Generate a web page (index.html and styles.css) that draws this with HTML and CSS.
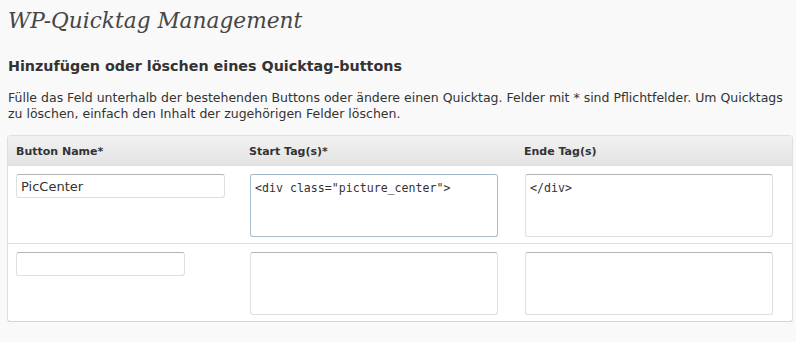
FILE: index.html
```html
<!DOCTYPE html>
<html lang="de">
<head>
    <meta charset="UTF-8">
    <title>WP-Quicktag Management</title>
    <link rel="stylesheet" href="styles.css">
</head>
<body>
    <div class="wrap">
        <h2>WP-Quicktag Management</h2>

        <h3>Hinzufügen oder löschen eines Quicktag-buttons</h3>
        <p>Fülle das Feld unterhalb der bestehenden Buttons oder ändere einen Quicktag. Felder mit * sind Pflichtfelder. Um Quicktags zu löschen, einfach den Inhalt der zugehörigen Felder löschen.</p>

        <table class="widefat">
            <thead>
                <tr>
                    <th class="col-name">Button Name*</th>
                    <th class="col-start">Start Tag(s)*</th>
                    <th class="col-end">Ende Tag(s)</th>
                </tr>
            </thead>
            <tbody>
                <tr>
                    <td><input type="text" class="name-wide" value="PicCenter"></td>
                    <td><textarea class="tag-field focused">&lt;div class="picture_center"&gt;</textarea></td>
                    <td><textarea class="tag-field">&lt;/div&gt;</textarea></td>
                </tr>
                <tr>
                    <td><input type="text" class="name-short" value=""></td>
                    <td><textarea class="tag-field"></textarea></td>
                    <td><textarea class="tag-field"></textarea></td>
                </tr>
            </tbody>
        </table>
    </div>
</body>
</html>
```

FILE: styles.css
```css
body {
    margin: 0;
    padding: 0;
    background: #f9f9f9;
    color: #333;
    font-family: 'DejaVu Sans', Verdana, sans-serif;
}

.wrap {
    padding: 5px 3px 0 7px;
}

.wrap h2 {
    margin: 0 0 0 1px;
    font-family: 'DejaVu Serif', Georgia, serif;
    font-style: italic;
    font-weight: normal;
    font-size: 21.7px;
    line-height: 32px;
    color: #464646;
}

.wrap h3 {
    margin: 19px 0 0 1px;
    font-size: 14.3px;
    line-height: 20px;
    color: #333;
}

.wrap p {
    margin: 14px 0 0 1px;
    font-size: 12.5px;
    line-height: 16px;
    color: #333;
}

/* Quicktag table */
.widefat {
    margin-top: 13px;
    width: 786px;
    border: 1px solid #dfdfdf;
    border-bottom-color: #d4d4d4;
    border-radius: 4px;
    border-spacing: 0;
    background: #fff;
    box-shadow: 0 1px 0 #e4e4e4;
}

.widefat th {
    padding: 8px 8px 6px;
    text-align: left;
    font-size: 11px;
    line-height: 15px;
    font-weight: bold;
    color: #333;
    background: linear-gradient(to bottom, #f2f2f2 0%, #e3e3e3 100%);
    border-bottom: 1px solid #dfdfdf;
}

.widefat th:first-child {
    border-top-left-radius: 3px;
}

.widefat th:last-child {
    border-top-right-radius: 3px;
}

.col-name {
    width: 217px;
}

.col-start {
    width: 259px;
}

.widefat td {
    padding: 8px 8px 6px;
    vertical-align: top;
    border-bottom: 1px solid #dfdfdf;
}

.widefat tbody tr:last-child td {
    border-bottom: none;
}

.widefat input,
.widefat textarea {
    display: block;
    box-sizing: border-box;
    margin: 0;
    border: 1px solid #dfdfdf;
    border-top-color: #b4b4b4;
    border-radius: 3px;
    background: #fff;
    color: #333;
    outline: none;
}

.widefat input {
    height: 24px;
    padding: 2px 4px;
    font-family: 'DejaVu Sans', Verdana, sans-serif;
    font-size: 13px;
}

.name-wide {
    width: 209px;
}

.name-short {
    width: 169px;
}

.widefat .tag-field {
    width: 248px;
    height: 63px;
    margin-left: 1px;
    padding: 6px 4px;
    resize: none;
    font-family: 'DejaVu Sans Mono', Consolas, monospace;
    font-size: 11.6px;
    line-height: 14px;
}

.widefat .tag-field.focused {
    border-color: #a6bccf;
    border-top-color: #9fb6ca;
}
```
